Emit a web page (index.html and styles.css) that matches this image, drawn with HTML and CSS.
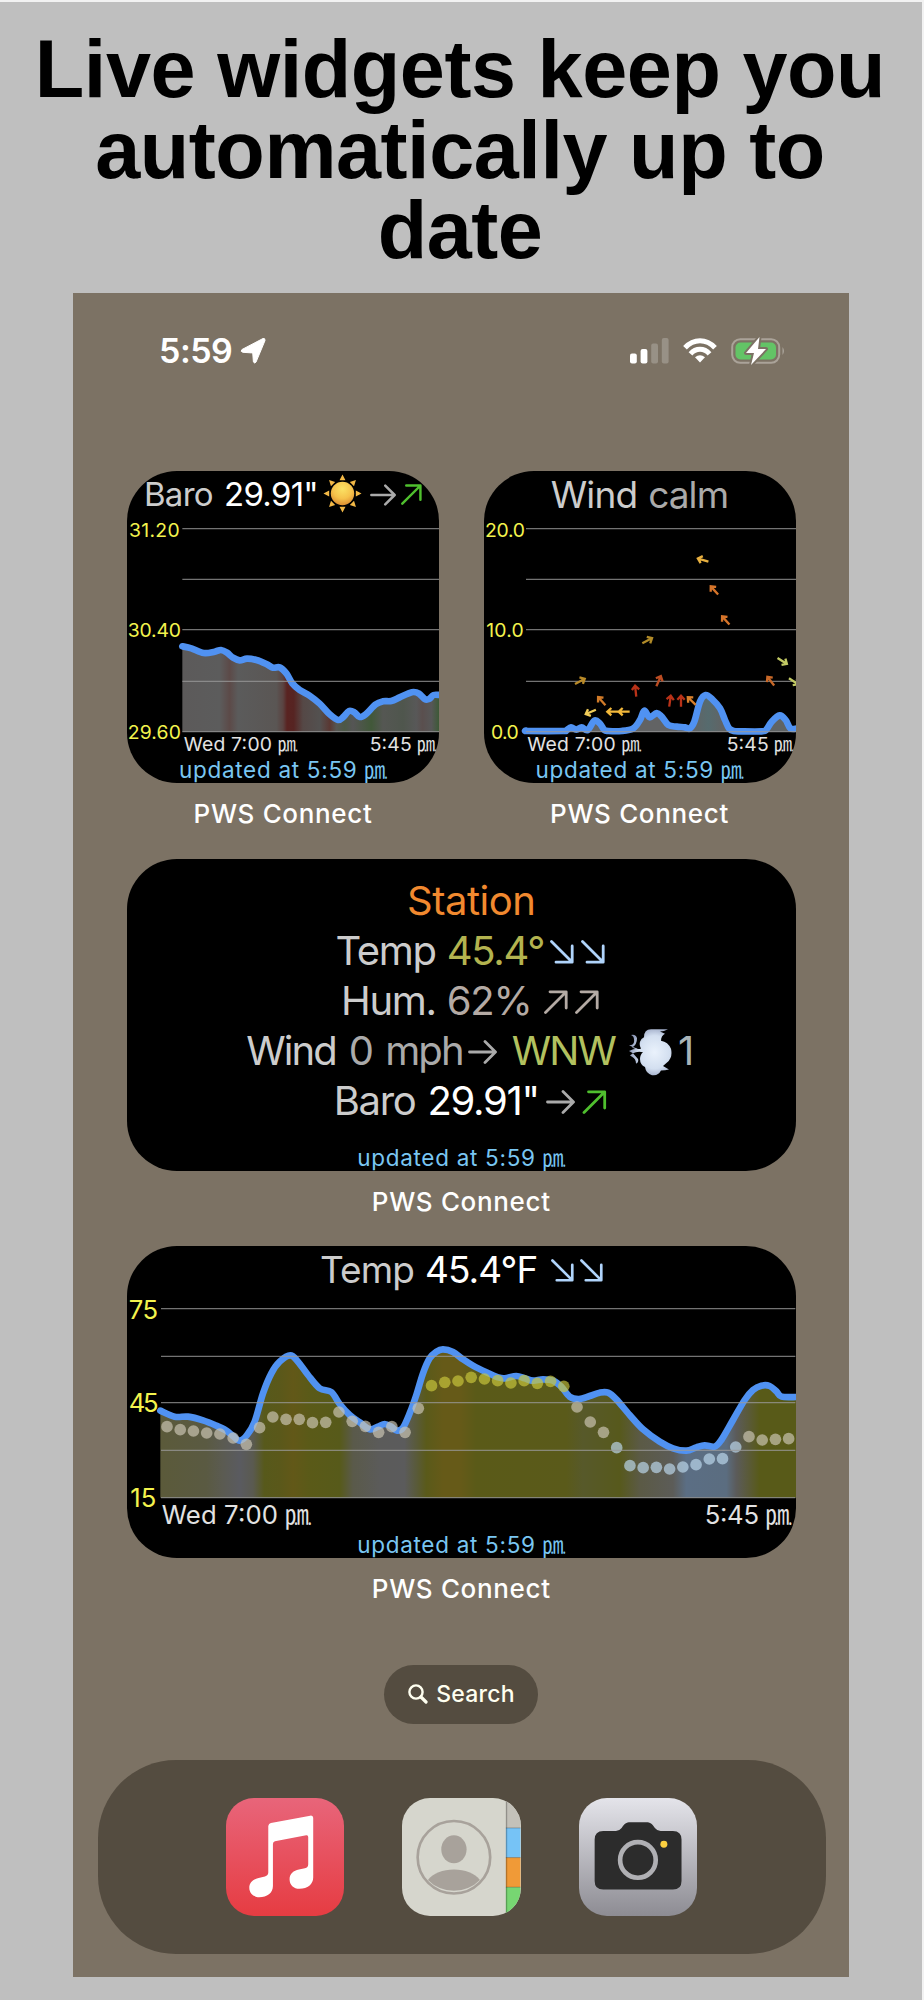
FILE: index.html
```html
<!DOCTYPE html>
<html lang="en">
<head>
  <meta charset="UTF-8">
  <meta name="viewport" content="width=device-width, initial-scale=1">
  <title>PWS Connect widgets</title>
  <link rel="stylesheet" href="styles.css">
</head>
<body>
  <!-- shared symbols -->
  <svg class="defs" width="0" height="0">
    <symbol id="ne" viewBox="0 0 24 24"><path d="M1.5 22.5 22 2M6 1.8h16.2V18"/></symbol>
    <symbol id="se" viewBox="0 0 24 24"><path d="M1.5 1.5 22 22M6 22.2h16.2V6"/></symbol>
    <symbol id="east" viewBox="0 0 29 24"><path d="M1.5 12H27M17 1.5 27.5 12 17 22.5"/></symbol>
  </svg>

  <div class="poster">
    <h1>Live widgets keep you<br>automatically up to<br>date</h1>

    <div class="phone">
      <div class="status">
        <div class="clock">
          <span>5:59</span>
          <svg width="26" height="27" viewBox="0 0 26 27"><path d="M23 1.5 2 12.5q-2 2 .8 2.8l9 .6q1 0 1 1l.6 8q1 2 2.6.2L25 3.500q.3-2.600-2-2z" fill="#fff" stroke="#fff"/></svg>
        </div>
        <div class="signals">
          <svg width="40" height="26" viewBox="0 0 40 26" fill="#fff">
            <rect x="0" y="15.500" width="6.800" height="10" rx="2"/>
            <rect x="10.600" y="11" width="6.800" height="14.500" rx="2"/>
            <rect x="21.200" y="5.500" width="6.800" height="20" rx="2" opacity=".22"/>
            <rect x="31.800" y="0" width="6.800" height="25.500" rx="2" opacity=".22"/>
          </svg>
          <svg class="wifi" width="34" height="25" viewBox="0 0 34 25" fill="none" stroke="#fff" stroke-width="5">
            <path d="M2 9.800Q8.500 2.800 17 2.800t15 7"/>
            <path d="M7.500 15.800Q11.500 11.200 17 11.200t9.500 4.600"/>
            <path d="M17 24.500l-5-5.300q5-4 10 0z" fill="#fff" stroke="none"/>
          </svg>
          <svg class="battery" width="56" height="28" viewBox="0 0 56 28">
            <rect x="1.200" y="2.200" width="47" height="23.600" rx="8" fill="none" stroke="#aaa399" stroke-width="2"/>
            <path d="M51.500 10q3 4 0 8z" fill="#aaa399"/>
            <rect x="4.500" y="5.500" width="40.500" height="17" rx="5" fill="#63c466"/>
            <path d="M28.500 0 15 16H23L20 28 35 12H27z" fill="#fff" stroke="#7c7264" stroke-width="4" stroke-linejoin="round" paint-order="stroke"/>
          </svg>
        </div>
      </div>

      <div class="pair">
        <div class="slot">
          <div class="widget">
            <div class="head baro">
              <span class="lbl">Baro</span><span class="val">29.91"</span>
              <svg class="sun" width="39" height="39" viewBox="-20 -20 40 40">
                <defs><radialGradient id="sg" cx=".5" cy=".3" r=".75"><stop offset="0" stop-color="#fbe265"/><stop offset=".55" stop-color="#f6c24b"/><stop offset="1" stop-color="#d9862d"/></radialGradient></defs>
                <path id="rays" fill="#f2b846" d=""/>
                <circle r="12" fill="url(#sg)"/>
              </svg>
              <svg class="arr east grey" width="26" height="22"><use href="#east"/></svg>
              <svg class="arr green" width="21" height="21"><use href="#ne"/></svg>
            </div>
            <svg class="chart" width="312" height="240" viewBox="22 156 936 720">
              <defs><linearGradient id="g1" gradientUnits="userSpaceOnUse" x1="0" x2="1000" y1="0" y2="0">
                <stop offset=".19" stop-color="#5c5a5a"/><stop offset=".3" stop-color="#5c5c5c"/><stop offset=".33" stop-color="#5c4a48"/><stop offset=".355" stop-color="#5b5b5b"/><stop offset=".47" stop-color="#5a5654"/><stop offset=".49" stop-color="#5a4341"/><stop offset=".502" stop-color="#592321"/><stop offset=".522" stop-color="#562422"/><stop offset=".55" stop-color="#554846"/><stop offset=".6" stop-color="#535150"/><stop offset=".63" stop-color="#5a3833"/><stop offset=".65" stop-color="#565653"/><stop offset=".675" stop-color="#4c5846"/><stop offset=".7" stop-color="#555"/><stop offset=".755" stop-color="#415839"/><stop offset=".79" stop-color="#555753"/><stop offset=".85" stop-color="#4f564d"/><stop offset=".89" stop-color="#585858"/><stop offset=".908" stop-color="#5a4f4e"/><stop offset=".935" stop-color="#575757"/><stop offset=".957" stop-color="#3e5938"/>
              </linearGradient></defs>
              <g id="baro"></g>
              <path class="grid" d="M188 191H958M188 343H958M188 494H958M188 649H958M188 800H958"/>
              <g class="axis">
                <text x="28" y="215" textLength="152">31.20</text>
                <text x="24" y="517" textLength="160">30.40</text>
                <text x="24" y="821" textLength="160">29.60</text>
              </g>
              <g class="time">
                <text x="192" y="857" textLength="265">Wed 7:00</text><text class="pm" x="475" y="857">㏘</text>
                <text x="750" y="857" textLength="126">5:45</text><text class="pm" x="893" y="857">㏘</text>
              </g>
            </svg>
            <div class="updated">updated at 5:59 <span class="pm">㏘</span></div>
          </div>
          <div class="name">PWS Connect</div>
        </div>

        <div class="slot">
          <div class="widget">
            <div class="head wind"><span class="lbl">Wind</span><span class="calm">calm</span></div>
            <svg class="chart" width="312" height="240" viewBox="27 156 936 720">
              <defs><linearGradient id="g2" gradientUnits="userSpaceOnUse" x1="0" x2="1000" y1="0" y2="0">
                <stop offset=".65" stop-color="#626364"/><stop offset=".7" stop-color="#566b6e"/><stop offset=".74" stop-color="#606465"/>
              </linearGradient></defs>
              <g id="wind"></g>
              <path class="grid" d="M153 191H963M153 343H963M153 494H963M153 649H963M153 800H963"/>
              <g id="vanes"></g>
              <g class="axis">
                <text x="30" y="215" textLength="120">20.0</text>
                <text x="34" y="517" textLength="112">10.0</text>
                <text x="48" y="821" textLength="83">0.0</text>
              </g>
              <g class="time">
                <text x="157" y="857" textLength="265">Wed 7:00</text><text class="pm" x="440" y="857">㏘</text>
                <text x="755" y="857" textLength="126">5:45</text><text class="pm" x="898" y="857">㏘</text>
              </g>
            </svg>
            <div class="updated">updated at 5:59 <span class="pm">㏘</span></div>
          </div>
          <div class="name">PWS Connect</div>
        </div>
      </div>

      <div class="slot">
        <div class="widget station">
          <div class="line title"><span>Station</span></div>
          <div class="line temp"><span class="lbl">Temp</span><span class="olive">45.4°</span><svg class="arr ice" width="24" height="24"><use href="#se"/></svg><svg class="arr ice" width="24" height="24"><use href="#se"/></svg></div>
          <div class="line hum"><span class="lbl">Hum.</span><span class="taupe">62%</span><svg class="arr taupe" width="24" height="24"><use href="#ne"/></svg><svg class="arr taupe" width="24" height="24"><use href="#ne"/></svg></div>
          <div class="line breeze"><span class="lbl">Wind</span><span class="grey">0</span><span class="grey mph">mph</span><svg class="arr east grey" width="29" height="24"><use href="#east"/></svg><span class="lime">WNW</span>
            <svg class="puff" width="44" height="54" viewBox="0 0 44 54">
              <defs><radialGradient id="pg" cx=".6" cy=".5" r=".6"><stop offset="0" stop-color="#eaf2fc"/><stop offset=".6" stop-color="#d3dff0"/><stop offset="1" stop-color="#8d99b8"/></radialGradient></defs>
              <path d="M1 15q6 0 5-5 0-3-3-4 5-1 6 3 0 6-5 8 4 2 9 1-2-3-1-6 1-3 4-4 0-7 7-7h17q-4 2-8 2l5 2q-4 2-4 6 7 1 10 7 2 8-4 12l-4 3 6 3q-4 1-8 1-3 5-9 4-6-1-7-7-5-2-5-7 0-4 3-6-6-1-10 1l5 5q1 3-2 4 0-4-4-6l-2-1 3-2-4-2q4-2 9-2-5-1-9-3z" transform="translate(0 4) scale(1 1.150)" fill="url(#pg)"/>
            </svg><span class="gust">1</span></div>
          <div class="line press"><span class="lbl">Baro</span><span class="val">29.91"</span><svg class="arr east grey" width="29" height="24"><use href="#east"/></svg><svg class="arr green" width="25" height="24"><use href="#ne"/></svg></div>
          <div class="updated">updated at 5:59 <span class="pm">㏘</span></div>
        </div>
        <div class="name">PWS Connect</div>
      </div>

      <div class="slot">
        <div class="widget">
          <div class="head tempf"><span class="lbl">Temp</span><span class="val">45.4°F</span><svg class="arr ice" width="23" height="23"><use href="#se"/></svg><svg class="arr ice" width="23" height="23"><use href="#se"/></svg></div>
          <svg class="chart" width="668.500" height="240" viewBox="22 156 2005.500 720">
            <defs><linearGradient id="g3" gradientUnits="userSpaceOnUse" x1="0" x2="2000" y1="0" y2="0">
              <stop offset=".062" stop-color="#5b5a3a"/><stop offset=".13" stop-color="#5a5a42"/><stop offset=".155" stop-color="#5b5b52"/><stop offset=".18" stop-color="#5a5b60"/><stop offset=".2" stop-color="#5a5a50"/><stop offset=".217" stop-color="#57591b"/><stop offset=".24" stop-color="#5a581a"/><stop offset=".26" stop-color="#625818"/><stop offset=".285" stop-color="#5a5a18"/><stop offset=".33" stop-color="#575a1a"/><stop offset=".35" stop-color="#5a5a4a"/><stop offset=".39" stop-color="#5b5b5a"/><stop offset=".427" stop-color="#5b5b5c"/><stop offset=".445" stop-color="#595a3a"/><stop offset=".46" stop-color="#5a5a1a"/><stop offset=".485" stop-color="#665a18"/><stop offset=".51" stop-color="#665a18"/><stop offset=".535" stop-color="#5a5a18"/><stop offset=".67" stop-color="#5a5a1a"/><stop offset=".695" stop-color="#57592a"/><stop offset=".75" stop-color="#57591c"/><stop offset=".78" stop-color="#5b5a45"/><stop offset=".83" stop-color="#5c5c58"/><stop offset=".85" stop-color="#5b6e84"/><stop offset=".91" stop-color="#5b6d80"/><stop offset=".925" stop-color="#5b5b5a"/><stop offset=".945" stop-color="#5a5a35"/><stop offset=".96" stop-color="#585a18"/>
            </linearGradient></defs>
            <g id="temp"></g>
            <g id="dew"></g>
            <path class="grid" d="M124 206H2027M124 349H2027M124 488H2027M124 631H2027M124 773H2027"/>
            <g class="axis big">
              <text x="27" y="236" textLength="88">75</text>
              <text x="27" y="516" textLength="90">45</text>
              <text x="32" y="801" textLength="78">15</text>
            </g>
            <g class="time big">
              <text x="126" y="853" textLength="349">Wed 7:00</text><text class="pm" x="497" y="853">㏘</text>
              <text x="1755" y="853" textLength="163">5:45</text><text class="pm" x="1938" y="853">㏘</text>
            </g>
          </svg>
          <div class="updated">updated at 5:59 <span class="pm">㏘</span></div>
        </div>
        <div class="name">PWS Connect</div>
      </div>

      <div class="search">
        <svg width="20" height="20" viewBox="0 0 20 20" fill="none" stroke="#fffff0" stroke-linecap="round"><circle cx="8" cy="8" r="6.600" stroke-width="2.400"/><path d="M13 13l5 5" stroke-width="3.200"/></svg>
        <span>Search</span>
      </div>

      <div class="dock">
        <svg class="app music" width="118.500" height="118.500" viewBox="47 51 356 356">
          <path fill="#fff" d="M174 135Q175 128 182 126L300 104Q308 103 309 110V290C309 310 292 324 268 324C250 324 238 312 238 295C238 279 250 269 266 266L284 262Q294 260 294 250V168Q294 162 288 163L194 181Q188 183 188 189V315C188 336 170 349 147 349C130 349 117 338 117 321C117 305 128 295 145 291L164 287Q174 284 174 275Z"/>
        </svg>
        <svg class="app contacts" width="118.500" height="118.500" viewBox="577 51 356 356">
          <rect x="889" y="51" width="44" height="90" fill="#c3c1b9"/>
          <rect x="889" y="141" width="44" height="89" fill="#76c3f6"/>
          <rect x="889" y="230" width="44" height="89" fill="#f09a37"/>
          <rect x="889" y="319" width="44" height="88" fill="#77d672"/>
          <path d="M889 141h44M889 230h44M889 319h44" stroke="#000" stroke-opacity=".25" stroke-width="3"/>
          <path d="M891 51v356" stroke="#000" stroke-opacity=".25" stroke-width="4"/>
          <circle cx="733" cy="229" r="109" fill="none" stroke="#a8a29b" stroke-width="8"/>
          <ellipse cx="733" cy="205" rx="38" ry="42" fill="#a8a29b"/>
          <path d="M655 297C670 277 700 266 733 266S796 277 811 297A109 109 0 0 1 655 297Z" fill="#a8a29b"/>
        </svg>
        <svg class="app camera" width="118.500" height="118.500" viewBox="55 51 356 356">
          <path fill="#2c2c2c" d="M128 150H166Q176 150 183 141C192 129 196 124 210 124H256C270 124 274 129 283 141Q290 150 300 150H337Q363 150 363 176V300Q363 326 337 326H128Q102 326 102 300V176Q102 150 128 150Z"/>
          <circle cx="232" cy="237" r="53.500" fill="none" stroke="#b0b0b4" stroke-width="14"/>
          <circle cx="310" cy="190" r="10.500" fill="#fcd040"/>
        </svg>
      </div>
    </div>
  </div>
  <script src="charts.js"></script>
</body>
</html>
```
FILE: styles.css
```css
body { margin: 0; background: #f2f2f2; font-family: Inter, "Liberation Sans", sans-serif; }
.defs { position: absolute; }
.poster { box-sizing: border-box; height: 1998px; margin: 2px 2px 0 0; background: #bfbfbf; overflow: hidden; }
h1 { margin: 27px 2px 0 0; height: 264px; font: bold 81px/80.5px "Liberation Sans", Arial, sans-serif; letter-spacing: -0.45px; text-align: center; color: #000; white-space: nowrap; }

.phone { box-sizing: border-box; width: 776px; height: 1684px; margin-left: 73px; padding: 0 53.5px 0 54px; background: #7c7264; overflow: hidden; }

/* status bar */
.status { display: flex; justify-content: space-between; height: 178px; color: #fff; }
.clock { display: flex; align-items: flex-start; margin: 37px 0 0 32px; font-size: 34px; font-weight: 600; line-height: 41px; }
.clock span { width: 72px; letter-spacing: -0.5px; }
.clock svg { margin: 7px 0 0 9px; }
.signals { display: flex; align-items: flex-start; margin: 45px 9px 0 0; }
.wifi { margin-left: 13px; }
.battery { margin: -1px 0 0 14px; }

/* widgets */
.pair { display: flex; justify-content: space-between; }
.slot { height: 387.6px; }
.pair .slot { width: 312px; }
.widget { height: 312px; border-radius: 50px; background: #000; overflow: hidden; }
.head { display: flex; justify-content: center; height: 46px; font-size: 33px; line-height: 47px; font-weight: 400; white-space: nowrap; letter-spacing: -0.7px; }
.head.wind, .head.tempf { font-size: 37px; letter-spacing: -0.9px; }
.chart { display: block; }
.name { margin-top: 15px; font-size: 26px; line-height: 32px; font-weight: 500; letter-spacing: .65px; color: #fff; text-align: center; }
.updated { height: 26px; font-size: 22.5px; line-height: 25px; color: #79c6f2; text-align: center; letter-spacing: .7px; white-space: nowrap; }
.pm { font-family: "Noto Sans CJK JP", sans-serif; }
.updated .pm { letter-spacing: 0; line-height: 20px; }

.lbl { color: #ccc; }
.val { color: #fff; }
.calm, .grey { color: #aaa; }
.olive { color: #b3b34f; }
.taupe { color: #b4aaa4; }
.lime { color: #b2c15f; }
.gust { color: #a9b4b8; }
.ice { color: #b0d4fb; }
.green { color: #4fbf2e; }

.arr { fill: none; stroke: currentColor; stroke-width: 2.8; stroke-linecap: round; stroke-linejoin: round; }
.baro .val { margin-left: 11px; }
.sun { margin: 3px 0 0 5px; }
.baro .east { margin: 13px 0 0 8px; }
.baro .green { margin: 13px 0 0 5px; }
.calm { margin-left: 11px; }
.tempf .val { margin-left: 11px; }
.tempf .ice { margin: 13px 0 0 13px; }
.tempf .ice + .ice { margin-left: 6px; }

/* station text */
.station { box-sizing: border-box; padding-top: 17px; }
.line { display: flex; justify-content: center; height: 50.2px; font-size: 40px; line-height: 50px; font-weight: 400; letter-spacing: -1.3px; white-space: nowrap; }
.line .arr { margin-top: 14px; }
.title { color: #f1892f; padding-left: 20px; letter-spacing: -0.5px; }
.temp { padding-left: 18px; }
.temp .olive, .hum span.taupe { margin-left: 11px; }
.temp .ice { margin-left: 6px; }
.hum { padding-left: 18px; }
.hum .arr { margin-left: 13px; }
.hum .arr + .arr, .temp .ice + .ice { margin-left: 7px; }
.breeze { padding-left: 16px; letter-spacing: -1.9px; }
.breeze .grey { margin-left: 13px; }
.breeze .east { margin-left: 5px; }
.lime { margin-left: 15px; }
.puff { margin: -2px 6px 0 13px; }
.press { padding-left: 18px; }
.press .val { margin-left: 12px; }
.press .east, .press .green { margin-left: 7px; }
.station .updated { margin-top: 18px; }

/* charts, three units to a pixel */
.series { fill: none; stroke: #5092f2; stroke-width: 20; stroke-linejoin: round; stroke-linecap: round; }
.grid { fill: none; stroke: #999; stroke-opacity: .75; stroke-width: 4; }
.axis { font-size: 58px; fill: #f3f34d; }
.time { font-size: 58px; fill: #e2e2e2; }
.axis.big, .time.big { font-size: 77px; }
#vanes { fill: none; stroke-width: 7; }

.search { box-sizing: border-box; display: flex; align-items: center; width: 154px; height: 59px; margin: 31px auto 0; padding-left: 24px; border-radius: 29.5px; background: #544c40; color: #fffff0; font-size: 23px; font-weight: 500; }
.search span { margin-left: 8px; letter-spacing: .2px; }

.dock { display: flex; justify-content: center; align-items: center; gap: 58px; width: 728px; height: 194px; margin: 36px 0 0 -29.5px; border-radius: 78px; background: #544c40; }
.app { border-radius: 28px; }
.music { background: linear-gradient(#e8657a, #e63c42); }
.contacts { background: #d6d6cd; }
.camera { background: linear-gradient(#e4e4ea, #8d8c93); }
```
FILE: charts.js
```js
// smooth path through a list of [x, y] points
function curve(p) {
  let d = `M${p[0][0]} ${p[0][1]}`;
  for (let i = 0; i < p.length - 1; i++) {
    const a = p[i - 1] || p[i], b = p[i], c = p[i + 1], e = p[i + 2] || c;
    d += `C${b[0] + (c[0] - a[0]) / 6} ${b[1] + (c[1] - a[1]) / 6} ${c[0] - (e[0] - b[0]) / 6} ${c[1] - (e[1] - b[1]) / 6} ${c[0]} ${c[1]}`;
  }
  return d;
}

function pairs(s) {
  return s.trim().split(/\s+/).map(t => t.split(',').map(Number));
}

function area(id, fill, floor, data) {
  const p = pairs(data);
  const d = curve(p);
  document.getElementById(id).innerHTML =
    `<path d="${d}L${p[p.length - 1][0]} ${floor}L${p[0][0]} ${floor}Z" fill="url(#${fill})"/>` +
    `<path class="series" d="${d}"/>`;
}

area('baro', 'g1', 800, `188,544 215,550 252,564 285,560 304,555 322,563 340,578 360,586 382,581 410,585 440,597
  460,608 480,607 500,625 518,655 540,675 570,692 600,716 630,748 655,765 672,755 688,738 704,742 720,756
  738,748 768,718 790,709 815,708 840,697 865,686 882,681 898,686 915,702 928,702 942,690 960,690`);

area('wind', 'g2', 800, `153,797 160,798 262,798 274,796 288,787 304,794 320,787 338,795 358,767 375,776 388,795
  400,798 440,798 475,790 495,765 508,737 524,757 545,744 560,755 580,780 605,785 630,787 644,791 658,770
  675,710 692,690 712,703 735,730 750,765 762,790 776,798 800,799 860,799 874,794 890,770 914,751 932,765
  946,790 965,791`);

area('temp', 'g3', 773, `122,512 165,530 205,530 250,541 290,557 320,572 340,588 360,602 382,585 405,545 430,460
  455,400 480,365 512,346 535,365 565,405 600,445 635,456 660,492 690,525 720,547 750,568 775,560 795,552
  815,560 832,572 850,563 870,520 890,465 910,400 930,355 950,335 970,328 1000,336 1030,358 1060,377
  1100,397 1135,412 1155,415 1190,408 1215,415 1240,422 1270,418 1300,422 1325,440 1350,470 1378,477
  1410,468 1440,458 1465,458 1490,478 1530,525 1570,568 1620,605 1660,625 1700,632 1730,622 1755,616
  1785,620 1805,600 1840,540 1875,480 1900,450 1925,437 1950,438 1970,454 1986,470 2030,471`);

// dew point dots, evenly spaced
const dew = [560, 569, 573, 579, 582, 594, 613, 563, 531, 538, 538, 548, 547, 516, 544, 559, 577, 560, 577, 505,
  437, 427, 423, 412, 417, 422, 429, 422, 430, 424, 439, 501, 546, 577, 623, 677, 683, 682, 687, 681, 674, 657,
  656, 621, 590, 600, 598, 596];
document.getElementById('dew').innerHTML = dew.map((y, i) => {
  let color = '#ccc6b4';
  if (i > 19 && i < 31) color = '#c9c63c';
  if (i > 33 && i < 44) color = '#bcd8ee';
  return `<circle cx="${142 + i * 39.68}" cy="${y}" r="17.500" fill="${color}" fill-opacity=".68"/>`;
}).join('');

// wind direction arrows: x, y, angle, color
const vanes = [
  [315, 649, -28, '#b98a28'], [380, 708, -132, '#d07a28'], [347, 741, 157, '#f0cc58'], [413, 740, 180, '#f2b83a'],
  [447, 740, 180, '#f2b83a'], [482, 678, -96, '#b93218'], [517, 527, -28, '#b08a28'], [551, 648, -66, '#bb4c22'],
  [585, 708, -82, '#b93218'], [618, 708, -90, '#b93218'], [650, 708, -136, '#d9802c'], [684, 285, -163, '#e8b040'],
  [718, 376, -132, '#d5742a'], [752, 466, -132, '#d5742a'], [887, 648, -128, '#c86828'], [922, 588, 32, '#c2c964'],
  [956, 649, 34, '#c2c964']
];
document.getElementById('vanes').innerHTML = vanes.map(([x, y, a, c]) =>
  `<path d="M-17 0H15M4-11 16 0 4 11" stroke="${c}" transform="translate(${x} ${y}) rotate(${a})"/>`).join('');

// sun rays
let rays = '';
for (let i = 0; i < 8; i++) {
  const t = i * Math.PI / 4;
  const at = (r, o) => `${(r * Math.cos(t + o)).toFixed(2)} ${(r * Math.sin(t + o)).toFixed(2)}`;
  rays += `M${at(19.5, 0)}L${at(14, .22)}L${at(14, -.22)}Z`;
}
document.getElementById('rays').setAttribute('d', rays);
```
